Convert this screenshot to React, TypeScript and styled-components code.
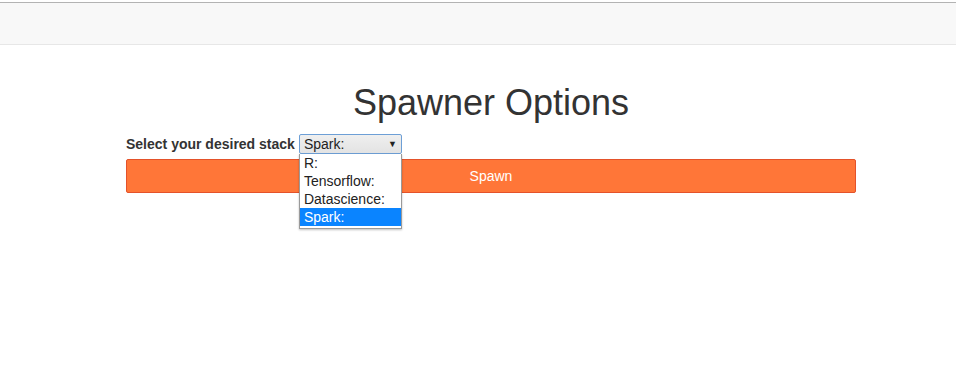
import React, {useState} from "react";
import styled, {createGlobalStyle} from "styled-components";

const GlobalStyle = createGlobalStyle`
    html, body {
        margin: 0;
        padding: 0;
        background: #fff;
        font-family: "Liberation Sans", Arial, sans-serif;
        font-size: 14px;
        color: #333;
    }
    #root {
        min-height: 386px;
    }
`;

const TopBar = styled.div`
    margin-top: 2px;
    border-top: 1px solid #b3b3b3;
    height: 41px;
    background: #f8f8f8;
    border-bottom: 1px solid #e7e7e7;
`;

const Container = styled.div`
    width: 730px;
    margin-left: 126px;
`;

const Title = styled.h1`
    margin: 38px 0 11px;
    font-size: 36px;
    font-weight: 500;
    line-height: 1.1;
    text-align: center;
    color: #333;
`;

const FieldRow = styled.div`
    position: relative;
    z-index: 2;
    display: flex;
    align-items: center;
    height: 20px;
`;

const Label = styled.label`
    font-weight: bold;
    font-size: 14px;
    margin-right: 4px;
`;

const SelectWrap = styled.div`
    position: relative;
    width: 103px;
`;

const SelectBox = styled.div`
    box-sizing: border-box;
    height: 20px;
    display: flex;
    align-items: center;
    justify-content: space-between;
    padding: 0 4px 0 4px;
    border: 1px solid #6d9fd6;
    border-radius: 2px;
    background: linear-gradient(#efefef, #e3e3e3);
    font-size: 14px;
    color: #222;
    cursor: default;
`;

const Arrow = styled.span`
    font-size: 9px;
    color: #222;
`;

const Menu = styled.ul`
    position: absolute;
    top: 20px;
    left: 0;
    width: 103px;
    box-sizing: border-box;
    margin: 0;
    padding: 0 0 2px;
    list-style: none;
    background: #fff;
    border: 1px solid #9a9a9a;
    border-top: none;
    box-shadow: 0 1px 2px rgba(0, 0, 0, 0.25);
    z-index: 5;
`;

const Option = styled.li<{$active: boolean}>`
    height: 18px;
    line-height: 18px;
    padding-left: 4px;
    font-size: 14px;
    color: ${(p) => (p.$active ? "#fff" : "#222")};
    background: ${(p) => (p.$active ? "#0a84ff" : "transparent")};
`;

const SpawnButton = styled.button`
    display: block;
    width: 100%;
    height: 34px;
    margin-top: 5px;
    border: 1px solid #e4522a;
    border-radius: 2px;
    background: #ff7638;
    color: #fff;
    font-family: "Liberation Sans", Arial, sans-serif;
    font-size: 14px;
`;

const stacks = ["R:", "Tensorflow:", "Datascience:", "Spark:"];

const App: React.FC = () => {
    const [selected, setSelected] = useState("Spark:");
    const [open, setOpen] = useState(true);

    return (
        <>
            <GlobalStyle/>
            <TopBar/>
            <Container>
                <Title>Spawner Options</Title>
                <FieldRow>
                    <Label>Select your desired stack</Label>
                    <SelectWrap>
                        <SelectBox onClick={() => setOpen(!open)}>
                            <span>{selected}</span>
                            <Arrow>▼</Arrow>
                        </SelectBox>
                        {open && (
                            <Menu>
                                {stacks.map((s) => (
                                    <Option key={s} $active={s === selected}
                                            onClick={() => { setSelected(s); setOpen(false); }}>
                                        {s}
                                    </Option>
                                ))}
                            </Menu>
                        )}
                    </SelectWrap>
                </FieldRow>
                <SpawnButton>Spawn</SpawnButton>
            </Container>
        </>
    );
};

export default App;
